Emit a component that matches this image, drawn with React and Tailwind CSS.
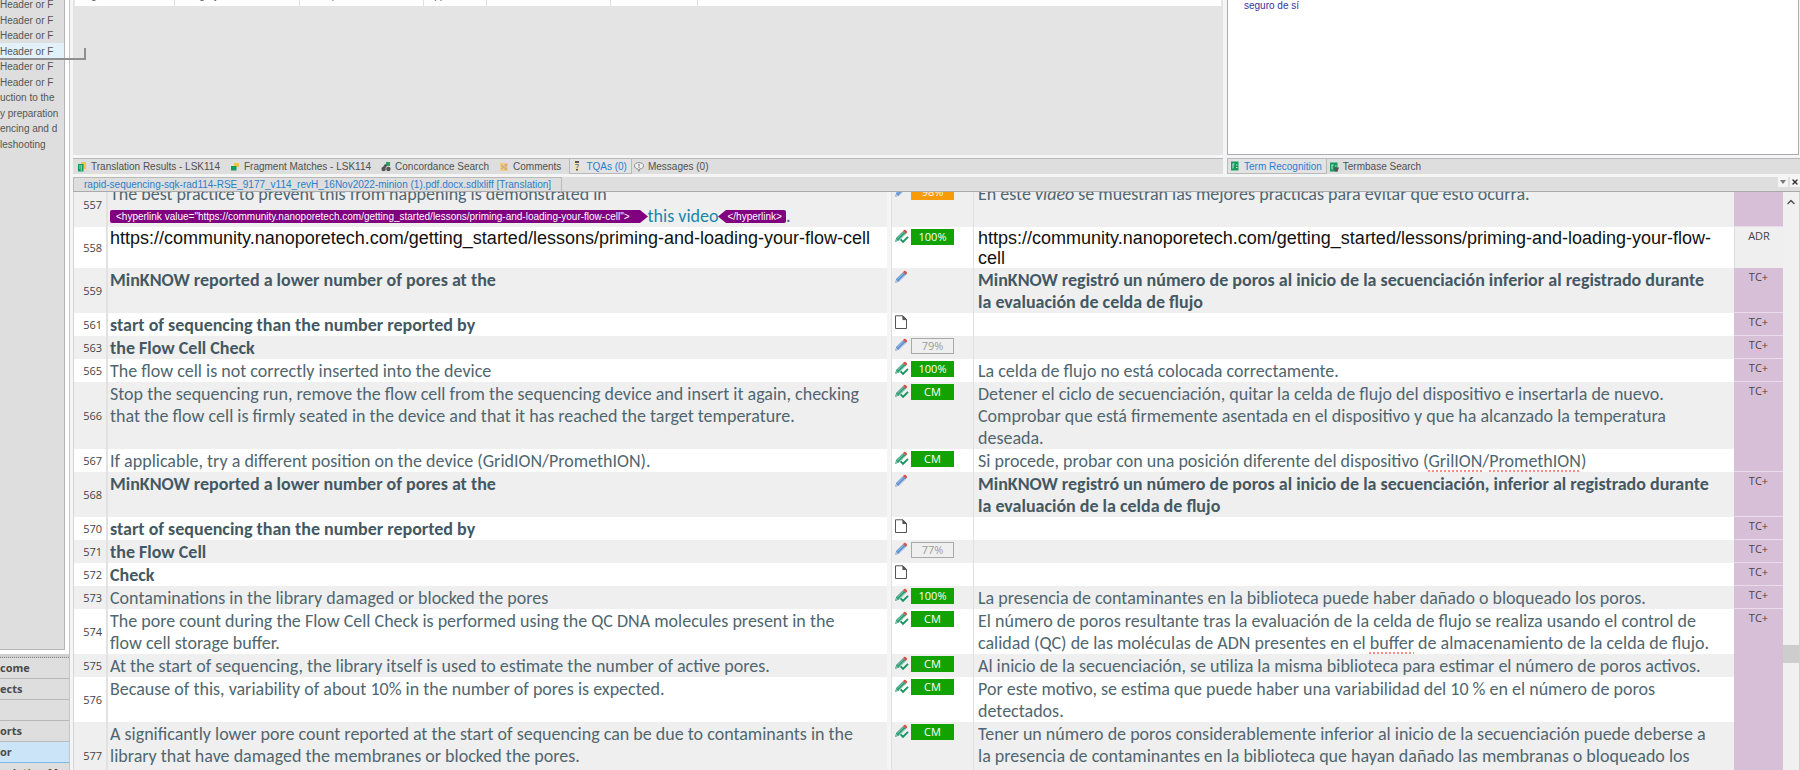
import clsx from 'clsx'
import { ChevronUp, X } from 'lucide-react'

const outline = [
  { label: 'Header or F' },
  { label: 'Header or F' },
  { label: 'Header or F' },
  { label: 'Header or F', active: true },
  { label: 'Header or F' },
  { label: 'Header or F' },
  { label: 'uction to the' },
  { label: 'y preparation' },
  { label: 'encing and d' },
  { label: 'leshooting' },
]

const views = [
  { label: 'come' },
  { label: 'ects' },
  { label: '' },
  { label: 'orts' },
  { label: 'or', active: true },
  { label: 'nslation M' },
]

const url = 'https://community.nanoporetech.com/getting_started/lessons/priming-and-loading-your-flow-'

const segments = [
  {
    id: 557,
    source: [
      'The best practice to prevent this from happening is demonstrated in',
      <span className="flex items-center" key="link">
        <Tag open>{'<hyperlink value="https://community.nanoporetech.com/getting_started/lessons/priming-and-loading-your-flow-cell">'}</Tag>
        <span className="text-[#1488ab]">this video</span>
        <Tag>{'</hyperlink>'}</Tag>.
      </span>,
    ],
    status: 'draft',
    match: '98%',
    target: [<span key="t">En este <i>vídeo</i> se muestran las mejores prácticas para evitar que esto ocurra.</span>],
    type: '',
  },
  { id: 558, plain: true, source: [url + 'cell'], status: 'done', match: '100%', target: [url, 'cell'], type: 'ADR' },
  {
    id: 559,
    bold: true,
    source: ['MinKNOW reported a lower number of pores at the'],
    status: 'draft',
    target: ['MinKNOW registró un número de poros al inicio de la secuenciación inferior al registrado durante', 'la evaluación de celda de flujo'],
    type: 'TC+',
  },
  { id: 561, bold: true, source: ['start of sequencing than the number reported by'], status: 'empty', target: [], type: 'TC+' },
  { id: 563, bold: true, source: ['the Flow Cell Check'], status: 'draft', match: '79%', target: [], type: 'TC+' },
  {
    id: 565,
    source: ['The flow cell is not correctly inserted into the device'],
    status: 'done',
    match: '100%',
    target: ['La celda de flujo no está colocada correctamente.'],
    type: 'TC+',
  },
  {
    id: 566,
    source: [
      'Stop the sequencing run, remove the flow cell from the sequencing device and insert it again, checking',
      'that the flow cell is firmly seated in the device and that it has reached the target temperature.',
    ],
    status: 'done',
    match: 'CM',
    target: [
      'Detener el ciclo de secuenciación, quitar la celda de flujo del dispositivo e insertarla de nuevo.',
      'Comprobar que está firmemente asentada en el dispositivo y que ha alcanzado la temperatura',
      'deseada.',
    ],
    type: 'TC+',
    joined: true,
  },
  {
    id: 567,
    source: ['If applicable, try a different position on the device (GridION/PromethION).'],
    status: 'done',
    match: 'CM',
    target: [<span key="t">Si procede, probar con una posición diferente del dispositivo (<Typo>GrilION</Typo>/<Typo>PromethION</Typo>)</span>],
    type: '',
  },
  {
    id: 568,
    bold: true,
    source: ['MinKNOW reported a lower number of pores at the'],
    status: 'draft',
    target: ['MinKNOW registró un número de poros al inicio de la secuenciación, inferior al registrado durante', 'la evaluación de la celda de flujo'],
    type: 'TC+',
  },
  { id: 570, bold: true, source: ['start of sequencing than the number reported by'], status: 'empty', target: [], type: 'TC+' },
  { id: 571, bold: true, source: ['the Flow Cell'], status: 'draft', match: '77%', target: [], type: 'TC+' },
  { id: 572, bold: true, source: ['Check'], status: 'empty', target: [], type: 'TC+' },
  {
    id: 573,
    source: ['Contaminations in the library damaged or blocked the pores'],
    status: 'done',
    match: '100%',
    target: ['La presencia de contaminantes en la biblioteca puede haber dañado o bloqueado los poros.'],
    type: 'TC+',
  },
  {
    id: 574,
    source: ['The pore count during the Flow Cell Check is performed using the QC DNA molecules present in the', 'flow cell storage buffer.'],
    status: 'done',
    match: 'CM',
    target: [
      'El número de poros resultante tras la evaluación de la celda de flujo se realiza usando el control de',
      <span key="t">calidad (QC) de las moléculas de ADN presentes en el <Typo>buffer</Typo> de almacenamiento de la celda de flujo.</span>,
    ],
    type: 'TC+',
    joined: true,
  },
  {
    id: 575,
    source: ['At the start of sequencing, the library itself is used to estimate the number of active pores.'],
    status: 'done',
    match: 'CM',
    target: ['Al inicio de la secuenciación, se utiliza la misma biblioteca para estimar el número de poros activos.'],
    type: '',
    joined: true,
  },
  {
    id: 576,
    source: ['Because of this, variability of about 10% in the number of pores is expected.'],
    status: 'done',
    match: 'CM',
    target: ['Por este motivo, se estima que puede haber una variabilidad del 10 % en el número de poros', 'detectados.'],
    type: '',
    joined: true,
  },
  {
    id: 577,
    source: ['A significantly lower pore count reported at the start of sequencing can be due to contaminants in the', 'library that have damaged the membranes or blocked the pores.'],
    status: 'done',
    match: 'CM',
    target: [
      'Tener un número de poros considerablemente inferior al inicio de la secuenciación puede deberse a',
      'la presencia de contaminantes en la biblioteca que hayan dañado las membranas o bloqueado los',
      'poros.',
    ],
    type: '',
    joined: true,
  },
]

// Inline tag with an arrow on the side that faces the text
function Tag({ open, children }) {
  return (
    <span className="flex items-center font-['Liberation_Sans',sans-serif] text-[10px] leading-[13px] text-white">
      {!open && (
        <svg width="8" height="13" viewBox="0 0 8 13" fill="#800080"><path d="M8 0 0 6.5 8 13z" /></svg>
      )}
      <span className={clsx('bg-[#800080]', open ? 'rounded-l-xs pl-1.5 pr-2.5' : 'rounded-r-xs pl-px pr-1')}>{children}</span>
      {open && (
        <svg width="8" height="13" viewBox="0 0 8 13" fill="#800080"><path d="M0 0 8 6.5 0 13z" /></svg>
      )}
    </span>
  )
}

function Typo({ children }) {
  return <span className="underline decoration-[#ff8a8a] decoration-dotted decoration-2 underline-offset-3">{children}</span>
}

function Pencil({ done }) {
  return (
    <svg width="15" height="15" viewBox="0 0 15 15" className="shrink-0">
      <path d="M1 13 2.3 8.8 9.2 1.9 12 4.7 5.1 11.6z" fill={done ? '#2b9a72' : '#5b8fd0'} />
      <path d="M3.4 9.2 9.6 3M5 10.8l6.2-6.2" stroke={done ? '#c9e6da' : '#cfe0f5'} strokeWidth=".7" />
      <path d="M1 13 2 9.8 4 11.8z" fill={done ? '#7fc5a8' : '#c2cad6'} />
      <path d="M9 2.1 10.2.9c.8-.8 3.6 1.6 2.8 2.6L11.8 4.9z" fill="#d6534c" />
      {done && <path d="M6.6 10.4 9 12.8l5-5" fill="none" stroke="#169461" strokeWidth="1.9" />}
    </svg>
  )
}

function PageIcon() {
  return (
    <svg width="15" height="15" viewBox="0 0 15 15" className="shrink-0" fill="#fff" stroke="#555">
      <path d="M1.5.8h7.5l3.5 3.6v9.1h-11z" />
      <path d="M8.9 1v3.6h3.5z" fill="#555" />
    </svg>
  )
}

function MatchBadge({ value }) {
  return (
    <span
      className={clsx(
        "flex h-4 w-[43px] items-center justify-center font-['Open_Sans',sans-serif] text-[11px] leading-4",
        value === '98%' && 'bg-[#f79b08] text-white',
        (value === '79%' || value === '77%') && 'border border-[#a9a9a9] text-[#9b9b9b]',
        (value === '100%' || value === 'CM') && 'bg-[#12a303] text-white'
      )}
    >
      {value}
    </span>
  )
}

function TabIcon({ name }) {
  return (
    <svg width="10" height="10" viewBox="0 0 10 10" className="shrink-0">
      {name === 'results' && (
        <>
          <path d="M4 0h5v7H4z" fill="#f2c14e" />
          <path d="M1 2h5.500v7.500H1z" fill="#169a5c" />
          <path d="M2 4h1.500M2 6h1.500M4.300 3v6" stroke="#fff" strokeWidth=".6" />
        </>
      )}
      {name === 'fragment' && (
        <>
          <path d="M4 1h5v4H4z" fill="#f2c14e" />
          <path d="M1 4h5.500v4.500H1z" fill="#169a5c" />
        </>
      )}
      {name === 'concordance' && (
        <>
          <path d="M5 0h4v4H5z" fill="#2ba15f" />
          <circle cx="2.600" cy="7" r="2.200" fill="#555" />
          <circle cx="7.400" cy="7" r="2.200" fill="#555" />
          <path d="M2 5 4 2l2 1-1 3z" fill="#555" />
        </>
      )}
      {name === 'comments' && (
        <>
          <path d="M1 1h8v8H1z" fill="#f0c987" />
          <path d="M2.500 3l2 2-2 2M5.500 3h2.500M5.500 5h1.500M5.500 7h2.500" stroke="#8f8a80" fill="none" strokeWidth=".8" />
        </>
      )}
      {name === 'tqa' && (
        <>
          <path d="M2 1h6v8.500H2z" fill="#f5dfb0" />
          <path d="M3 0h4v2H3zM4 8h2v1.500H4z" fill="#555" />
          <path d="M3.300 3.500h3v1.800L5 6.200v1" stroke="#5b7fa8" fill="none" />
        </>
      )}
      {name === 'messages' && (
        <>
          <path d="M5 .6c2.600 0 4.500 1.300 4.500 3.200S7.700 7 5.600 7L5 9.300 4 7C2 6.800.5 5.600.5 3.800S2.400.6 5 .6z" fill="#f2f2f2" stroke="#777" strokeWidth=".8" />
          <path d="M5 2v2.500M5 5.200v.9" stroke="#666" />
        </>
      )}
      {(name === 'term' || name === 'termsearch') && (
        <>
          <path d="M1 .5h7.500v9H1z" fill="#169a5c" />
          <path d="M2.500 3h2M3 3v4.500M6 4h1.500M6 6.500h1.500" stroke="#d9f2e5" strokeWidth=".9" />
          {name === 'termsearch' && <path d="M5 5.500h5L8.500 9.500H6z" fill="#555" />}
        </>
      )}
    </svg>
  )
}

function Tab({ icon, label, active }) {
  return (
    <button
      type="button"
      className={clsx(
        'flex h-full items-center gap-1 whitespace-nowrap pl-0.5',
        active ? 'border-x border-b border-[#b9b9b9] bg-[#e3e3e3] pr-1 text-[#1f7fd0]' : 'pr-2 text-[#505050]'
      )}
    >
      <TabIcon name={icon} />
      {label}
    </button>
  )
}

function Lines({ items }) {
  return items.map((line, i) => <div key={i}>{line}</div>)
}

function SegmentRow({ seg, shaded }) {
  const text = clsx(
    'whitespace-nowrap p-0 pt-px align-top text-[18px]',
    seg.plain ? "font-['Liberation_Sans',sans-serif] leading-5 text-[#111]" : 'leading-[22px]',
    !seg.plain && (seg.bold ? 'font-bold text-[#435862]' : 'text-[#50666f]')
  )

  return (
    <tr className={shaded ? 'bg-[#efefef]' : 'bg-white'}>
      <td className="border-r-2 border-[#e2e2e2] p-0 pr-1 text-right align-middle font-['Open_Sans',sans-serif] text-[11px] leading-4 text-[#444]">
        {seg.id}
      </td>
      <td className={clsx(text, 'border-r-4 border-[#f5f5f5] pl-0.5')}><Lines items={seg.source} /></td>
      <td className="border-x border-[#e0e0e0] p-0 pl-0.5 pt-0.5 align-top">
        <div className="flex gap-0.5">
          {seg.status === 'empty' ? <PageIcon /> : <Pencil done={seg.status === 'done'} />}
          {seg.match && <MatchBadge value={seg.match} />}
        </div>
      </td>
      <td className={clsx(text, 'pl-1')}><Lines items={seg.target} /></td>
      <td
        className={clsx(
          "p-0 text-center align-top font-['Open_Sans',sans-serif] text-[11px] leading-[18px] text-[#444]",
          seg.type === 'ADR' ? 'border-l border-[#dcdcdc] bg-[#efefef]' : 'bg-[#d8bfd8]',
          seg.type !== 'ADR' && !seg.joined && 'border-b border-[#e9dbe9]'
        )}
      >
        {seg.type}
      </td>
    </tr>
  )
}

function Sidebar() {
  return (
    <aside className="relative flex w-[70px] shrink-0 flex-col border-r border-[#c4c4c4] bg-white">
      <ul className="-mt-[3px] mr-1 h-[653px] shrink-0 border-b border-r border-[#b5b5b5] bg-[#dedede]">
        {outline.map((item, i) => (
          <li key={i} className="odd:h-[15px] even:h-4">
            <button
              type="button"
              className={clsx(
                'block h-full w-full overflow-hidden whitespace-nowrap text-left leading-[15px] text-[#555]',
                item.active && 'bg-[#e3f1fb]'
              )}
            >
              {item.label}
            </button>
          </li>
        ))}
      </ul>
      {/* Corner left by the dragged panel outline */}
      <div className="absolute left-0 top-12 z-10 h-3 w-[86px] border-b-2 border-r-2 border-[#8f8f8f]" />

      <nav className="mt-1 flex-1 overflow-hidden bg-[#dedede] font-['Open_Sans',sans-serif] text-[11px] font-bold text-[#4a4a4a]">
        <div className="h-1 border-b border-dotted border-[#888] bg-[#cfcfcf]" />
        {views.map((view, i) => (
          <button
            key={i}
            type="button"
            aria-label={view.label || 'View'}
            className={clsx(
              'block h-[21px] w-full overflow-hidden whitespace-nowrap border-b text-left leading-5',
              view.active ? 'border-[#7db9e0] bg-[#cce4f7]' : 'border-[#b8b8b8]'
            )}
          >
            {view.label}
          </button>
        ))}
      </nav>
    </aside>
  )
}

function QualityPanel() {
  return (
    <section className="flex min-w-0 flex-1 flex-col">
      <div className="flex-1 bg-[#e4e4e4] px-0.5">
        <div className="h-1.5 overflow-hidden">
          <table className="-mt-[11px] h-[17px] w-full table-fixed bg-white text-left align-top leading-[14px] text-[#555]">
            <thead>
              <tr className="divide-x divide-[#dcdfe6] align-top">
                <th className="w-[99px] p-0 pl-1 font-normal">Segment ID</th>
                <th className="w-[125px] p-0 pl-1 font-normal">Category</th>
                <th className="w-[124px] p-0 pl-1 font-normal">Description</th>
                <th className="w-[63px] p-0 pl-1 font-normal">Applied</th>
                <th className="w-[124px] p-0" />
                <th className="w-[87px] p-0" />
                <th className="p-0" />
              </tr>
            </thead>
          </table>
        </div>
      </div>
      <div className="mt-[3px] flex h-4 border-t border-[#b9b9b9] bg-[#dedede] pl-0.5">
        <Tab icon="results" label="Translation Results - LSK114" />
        <Tab icon="fragment" label="Fragment Matches - LSK114" />
        <Tab icon="concordance" label="Concordance Search" />
        <Tab icon="comments" label="Comments" />
        <Tab icon="tqa" label="TQAs (0)" active />
        <Tab icon="messages" label="Messages (0)" />
      </div>
    </section>
  )
}

function TermPanel() {
  return (
    <section className="flex w-[573px] shrink-0 flex-col">
      <div className="mr-px flex-1 border border-t-0 border-[#a9abb0] bg-white pl-4 leading-3 text-[#33339a]">seguro de sí</div>
      <div className="mt-[3px] flex h-4 border-t border-[#b9b9b9] bg-[#dedede]">
        <Tab icon="term" label="Term Recognition" active />
        <Tab icon="termsearch" label="Termbase Search" />
      </div>
    </section>
  )
}

export default function App() {
  return (
    <div className="flex h-screen overflow-hidden bg-[#f5f5f5] font-['Liberation_Sans',sans-serif] text-[10px]">
      <Sidebar />

      <main className="ml-[3px] flex min-w-0 flex-1 flex-col">
        <div className="flex h-[174px] shrink-0 gap-1">
          <QualityPanel />
          <TermPanel />
        </div>

        <div className="mt-[3px] flex h-[15px] shrink-0 items-stretch justify-between border-b border-[#a9a9a9] bg-[#dedede]">
          <button type="button" className="whitespace-nowrap border-l border-r border-t border-[#b9b9b9] px-2.5 leading-[14px] text-[#2a7fc9]">
            rapid-sequencing-sqk-rad114-RSE_9177_v114_revH_16Nov2022-minion (1).pdf.docx.sdlxliff [Translation]
          </button>
          <div className="flex gap-0.5 pb-1">
            <button type="button" aria-label="Documents" className="flex w-2.5 items-center justify-center bg-[#f5f5f5]">
              <svg width="6" height="4" viewBox="0 0 6 4" fill="#777"><path d="M0 0h6L3 4z" /></svg>
            </button>
            <button type="button" aria-label="Close" className="flex w-2.5 items-center justify-center bg-[#f5f5f5] text-[#333]">
              <X size={8} strokeWidth={4} />
            </button>
          </div>
        </div>

        <div className="flex min-h-0 flex-1 overflow-hidden border-l border-[#d5d5d5]">
          <div className="min-w-0 flex-1">
            <table className="-mt-2.5 w-full table-fixed border-separate border-spacing-0 font-['Carlito','Lato',sans-serif]">
              <colgroup>
                <col className="w-[34px]" />
                <col className="w-[783px]" />
                <col className="w-[83px]" />
                <col />
                <col className="w-[49px]" />
              </colgroup>
              <tbody>
                {segments.map((seg, i) => (
                  <SegmentRow key={seg.id} seg={seg} shaded={i % 2 === 0} />
                ))}
              </tbody>
            </table>
          </div>

          <div className="flex w-[17px] shrink-0 flex-col items-center border-r border-[#cfcfcf] bg-[#f0f0f0]">
            <ChevronUp size={12} strokeWidth={3} className="mt-1 text-[#555]" />
            <div className="mt-[437px] h-[18px] w-full bg-[#cdcdcd]" />
          </div>
        </div>
      </main>
    </div>
  )
}
